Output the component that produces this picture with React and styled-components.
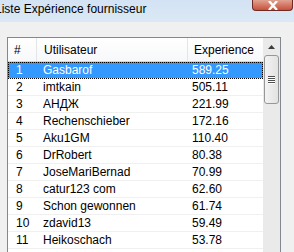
import React from 'react';
import styled, { createGlobalStyle } from 'styled-components';

const GlobalStyle = createGlobalStyle`
  html, body { margin: 0; padding: 0; background: #f0f0f0; }
  body { font-family: "Liberation Sans", Arial, sans-serif; }
`;

const players = [
  ['1', 'Gasbarof', '589.25'],
  ['2', 'imtkain', '505.11'],
  ['3', 'АНДЖ', '221.99'],
  ['4', 'Rechenschieber', '172.16'],
  ['5', 'Aku1GM', '110.40'],
  ['6', 'DrRobert', '80.38'],
  ['7', 'JoseMariBernad', '70.99'],
  ['8', 'catur123 com', '62.60'],
  ['9', 'Schon gewonnen', '61.74'],
  ['10', 'zdavid13', '59.49'],
  ['11', 'Heikoschach', '53.78'],
];

const Window = styled.div`
  width: 294px;
  height: 252px;
  overflow: hidden;
  display: flex;
  flex-direction: column;
  background: #f0f0f0;
`;

const TitleBar = styled.div`
  height: 22px;
  flex: none;
  display: flex;
  align-items: flex-start;
  justify-content: space-between;
  background: linear-gradient(#d3e3f4, #dce8f5);
`;

const Title = styled.span`
  font-size: 12px;
  line-height: 18px;
  color: #000;
  margin-left: -5px;
  white-space: nowrap;
`;

const CloseButton = styled.div`
  width: 41px;
  height: 11px;
  margin-right: 1px;
  border: 1px solid #6f2a24;
  border-top: none;
  border-radius: 0 0 4px 4px;
  background: linear-gradient(#e0a391, #c8503c);
  display: flex;
  justify-content: center;
  align-items: flex-end;
  box-sizing: border-box;
`;

const Client = styled.div`
  flex: 1;
  padding: 15px 13px 0 7px;
  display: flex;
  min-height: 0;
`;

const ListView = styled.div`
  flex: 1;
  display: flex;
  border: 1px solid #828790;
  border-bottom: none;
  background: #fff;
  min-height: 0;
`;

const Grid = styled.div`
  flex: 1;
  display: flex;
  flex-direction: column;
  font-size: 12px;
  color: #000;
  min-width: 0;
`;

const Row = styled.div`
  display: grid;
  grid-template-columns: 29px 151px 1fr;
  height: ${p => (p.$header ? '24px' : '17px')};
  flex: none;
  box-sizing: border-box;
  border-bottom: 1px solid ${p => (p.$header ? '#d5d5d5' : '#f0f0f0')};
  background: ${p => (p.$selected ? '#3399ff' : p.$header ? 'linear-gradient(#ffffff, #f7f8fa)' : '#fff')};
  color: ${p => (p.$selected ? '#fff' : '#000')};
  outline: ${p => (p.$selected ? '1px dotted #000' : 'none')};
  outline-offset: -1px;
`;

const Cell = styled.div`
  display: flex;
  align-items: center;
  padding-left: ${p => p.$pad}px;
  white-space: nowrap;
  overflow: hidden;
  border-right: ${p => (p.$sep ? '1px solid #e5e5e5' : 'none')};
`;

const ScrollBar = styled.div`
  width: 17px;
  flex: none;
  display: flex;
  flex-direction: column;
  align-items: center;
  background: #eaeaea;
`;

const ArrowButton = styled.div`
  height: 17px;
  width: 17px;
  display: flex;
  align-items: center;
  justify-content: center;
`;

const Thumb = styled.div`
  width: 15px;
  height: 49px;
  box-sizing: border-box;
  border: 1px solid #979797;
  border-radius: 3px;
  background: linear-gradient(90deg, #f3f3f3, #e2e2e2);
  display: flex;
  flex-direction: column;
  align-items: center;
  justify-content: center;
  gap: 1px;
`;

const Grip = styled.span`
  width: 7px;
  height: 1px;
  background: #4e4e4e;
  box-shadow: 0 1px 0 #fff;
`;

export default function App() {
  return (
    <Window>
      <GlobalStyle />
      <TitleBar>
        <Title>Liste Expérience fournisseur</Title>
        <CloseButton>
          <svg width="12" height="9" viewBox="0 0 12 9">
            <path d="M2 0 L10 9 M10 0 L2 9" stroke="#fff" strokeWidth="2.4" fill="none" />
          </svg>
        </CloseButton>
      </TitleBar>
      <Client>
        <ListView>
          <Grid>
            <Row $header>
              <Cell $pad={6} $sep>#</Cell>
              <Cell $pad={7} $sep>Utilisateur</Cell>
              <Cell $pad={6}>Experience</Cell>
            </Row>
            {players.map(([rank, name, xp], i) => (
              <Row key={rank} $selected={i === 0}>
                <Cell $pad={8}>{rank}</Cell>
                <Cell $pad={6}>{name}</Cell>
                <Cell $pad={4}>{xp}</Cell>
              </Row>
            ))}
          </Grid>
          <ScrollBar>
            <ArrowButton>
              <svg width="7" height="4" viewBox="0 0 7 4">
                <path d="M0 4 L3.5 0 L7 4 Z" fill="#3c3c3c" />
              </svg>
            </ArrowButton>
            <Thumb>
              <Grip />
              <Grip />
              <Grip />
              <Grip />
            </Thumb>
          </ScrollBar>
        </ListView>
      </Client>
    </Window>
  );
}
